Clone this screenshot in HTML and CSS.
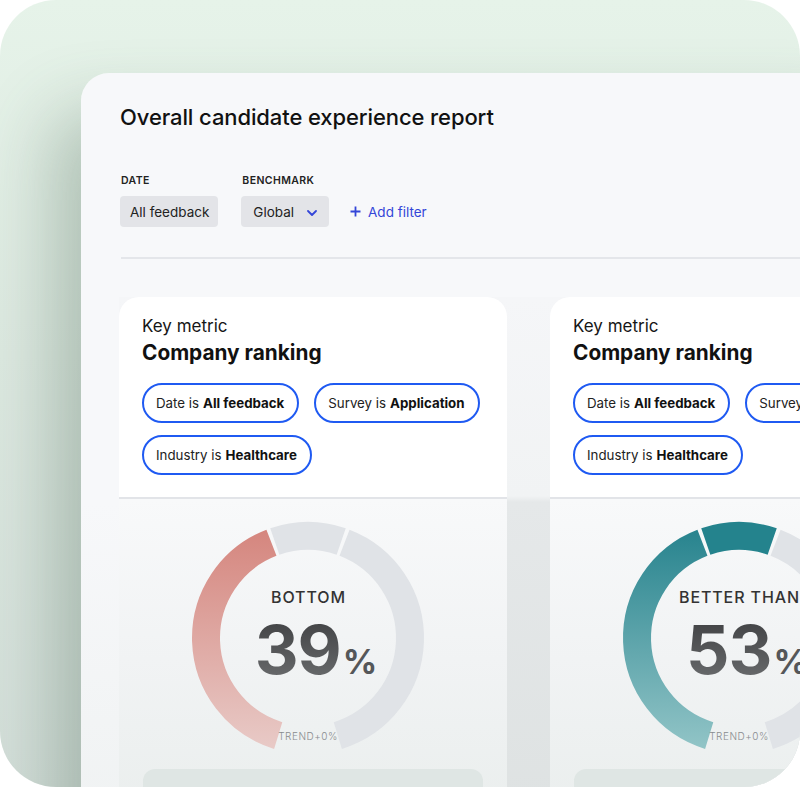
FILE: index.html
```html
<!DOCTYPE html>
<html lang="en">
<head>
<meta charset="utf-8">
<title>Overall candidate experience report</title>
<link rel="stylesheet" href="styles.css">
</head>
<body>
<div class="frame">
  <div class="panel">
    <h1 class="title">Overall candidate experience report</h1>
    <div class="filters">
      <div class="filter">
        <div class="flabel">DATE</div>
        <div class="fbtn">All feedback</div>
      </div>
      <div class="filter">
        <div class="flabel">BENCHMARK</div>
        <div class="fbtn">Global
          <svg class="chev" width="10" height="6" viewBox="0 0 10 6"><path d="M1 1l4 4 4-4" fill="none" stroke="#3446d8" stroke-width="1.8" stroke-linecap="round" stroke-linejoin="round"/></svg>
        </div>
      </div>
      <div class="addfilter">
        <svg width="11" height="11" viewBox="0 0 11 11"><path d="M5.5 0.5v10M0.5 5.5h10" stroke="#3446d8" stroke-width="1.8"/></svg>
        <span>Add filter</span>
      </div>
    </div>
    <div class="divider"></div>
    <div class="cards">
      <div class="card">
        <div class="card-top">
          <div class="kicker">Key metric</div>
          <div class="ctitle">Company ranking</div>
          <div class="pills">
            <div class="pill">Date is <b>All feedback</b></div>
            <div class="pill">Survey is <b>Application</b></div>
            <div class="pill">Industry is <b>Healthcare</b></div>
          </div>
        </div>
        <div class="card-bottom">
          <div class="gauge-row">
            <div class="gauge">
              <svg class="ring" width="240" height="240" viewBox="0 0 240 240">
                <defs>
                  <linearGradient id="redg" x1="0" y1="0" x2="0" y2="240" gradientUnits="userSpaceOnUse">
                    <stop offset="0" stop-color="#d4827a"/>
                    <stop offset="1" stop-color="#e9cdca"/>
                  </linearGradient>
                </defs>
                <path d="M90.18 217.54 A102 102 0 0 1 83.45 24.77" fill="none" stroke="url(#redg)" stroke-width="28"/>
                <path d="M86.79 23.56 A102 102 0 0 1 153.21 23.56" fill="none" stroke="#e0e3e7" stroke-width="28"/>
                <path d="M156.55 24.77 A102 102 0 0 1 149.82 217.54" fill="none" stroke="#e0e3e7" stroke-width="28"/>
              </svg>
              <div class="gtext">
                <div class="glabel">BOTTOM</div>
                <div class="gnum"><span class="num">39</span><span class="pct">%</span></div>
              </div>
              <div class="trend">TREND+0%</div>
            </div>
          </div>
          <div class="placeholder"></div>
        </div>
      </div>
      <div class="card">
        <div class="card-top">
          <div class="kicker">Key metric</div>
          <div class="ctitle">Company ranking</div>
          <div class="pills">
            <div class="pill">Date is <b>All feedback</b></div>
            <div class="pill">Survey is <b>Application</b></div>
            <div class="pill">Industry is <b>Healthcare</b></div>
          </div>
        </div>
        <div class="card-bottom">
          <div class="gauge-row">
            <div class="gauge">
              <svg class="ring" width="240" height="240" viewBox="0 0 240 240">
                <defs>
                  <linearGradient id="tealg" x1="0" y1="0" x2="0" y2="240" gradientUnits="userSpaceOnUse">
                    <stop offset="0" stop-color="#22808b"/>
                    <stop offset="1" stop-color="#96c7c9"/>
                  </linearGradient>
                </defs>
                <path d="M90.18 217.54 A102 102 0 0 1 83.45 24.77" fill="none" stroke="url(#tealg)" stroke-width="28"/>
                <path d="M86.79 23.56 A102 102 0 0 1 153.21 23.56" fill="none" stroke="#24838d" stroke-width="28"/>
                <path d="M156.55 24.77 A102 102 0 0 1 149.82 217.54" fill="none" stroke="#e0e3e7" stroke-width="28"/>
              </svg>
              <div class="gtext">
                <div class="glabel">BETTER THAN</div>
                <div class="gnum"><span class="num">53</span><span class="pct">%</span></div>
              </div>
              <div class="trend">TREND+0%</div>
            </div>
          </div>
          <div class="placeholder"></div>
        </div>
      </div>
    </div>
  </div>
</div>
</body>
</html>
```
FILE: styles.css
```css
* { box-sizing: border-box; }
html, body { margin: 0; padding: 0; background: #ffffff; }
body { font-family: Inter, "Noto Sans", sans-serif; color: #151515; }

.frame {
  width: 800px;
  height: 787px;
  overflow: hidden;
  border-radius: 56px;
  background: linear-gradient(to bottom, #e6f3e9 0%, #dde9e1 45%, #d3ded9 100%);
  padding: 73px 0 0 81px;
}

.panel {
  width: 800px;
  height: 820px;
  background: linear-gradient(to bottom, #f7f8fa 0, #f7f8fa 430px, #eef1f1 100%);
  border-top-left-radius: 28px;
  box-shadow: -28px 40px 70px rgba(70, 100, 82, 0.32);
  padding: 30px 0 0 39px;
}

.title {
  margin: 0;
  font-size: 22px;
  line-height: 28px;
  font-weight: 500;
  letter-spacing: -0.1px;
  color: #111;
}

.filters {
  display: flex;
  align-items: flex-end;
  margin-top: 43px;
}
.filter { display: flex; flex-direction: column; margin-right: 23px; }
.flabel {
  font-size: 10.5px;
  line-height: 14px;
  font-weight: 600;
  letter-spacing: 0.4px;
  color: #222;
  margin-bottom: 8px;
  padding-left: 1px;
}
.fbtn {
  height: 31px;
  display: flex;
  align-items: center;
  padding: 0 9px 0 10px;
  background: #e3e4e8;
  border-radius: 4px;
  font-size: 13.5px;
  color: #222;
}
.filter + .filter .fbtn { padding-right: 12px; padding-left: 12px; }
.chev { margin-left: 13px; margin-top: 2px; }
.addfilter {
  height: 31px;
  display: flex;
  align-items: center;
  gap: 7px;
  margin-left: -2px;
  color: #3446d8;
  font-size: 13.5px;
}

.divider {
  height: 2px;
  background: #e4e6ea;
  margin-top: 30px;
  margin-left: 1px;
}

.cards {
  display: flex;
  gap: 43px;
  margin-top: 38px;
  margin-left: -1px;
  background: linear-gradient(to bottom, #f5f6f8 0, #f1f3f4 199px, #e5e8e9 205px, #dee2e2 100%);
}
.card {
  width: 388px;
  flex: none;
  border-radius: 20px 20px 0 0;
  overflow: hidden;
}
.card-top {
  background: #ffffff;
  padding: 18px 0 22px 23px;
  border-bottom: 2px solid #e2e4e8;
}
.kicker { font-size: 17px; line-height: 22px; color: #161616; }
.ctitle { font-size: 20.8px; line-height: 26px; font-weight: 700; color: #111; margin-top: 3px; }
.pills {
  display: flex;
  flex-wrap: wrap;
  gap: 12px 15px;
  margin-top: 17px;
  width: 355px;
}
.pill {
  height: 40px;
  display: flex;
  align-items: center;
  padding: 0 13px 0 12px;
  border: 2px solid #1f5af2;
  border-radius: 20px;
  font-size: 13.3px;
  color: #222;
  white-space: nowrap;
}
.pill b { font-weight: 700; color: #111; margin-left: 4px; }

.card-bottom {
  background: linear-gradient(to bottom, #f8f9fa 0%, #f1f3f4 50%, #eaeeed 100%);
  padding-top: 19px;
  height: 320px;
}
.gauge-row { display: flex; justify-content: center; padding-right: 10px; }
.gauge {
  display: grid;
  width: 240px;
  height: 240px;
}
.ring, .gtext, .trend { grid-area: 1 / 1; }
.gtext {
  display: flex;
  flex-direction: column;
  align-items: center;
  padding-top: 69px;
}
.glabel {
  font-size: 16px;
  line-height: 20px;
  font-weight: 500;
  letter-spacing: 0.9px;
  color: #333;
  white-space: nowrap;
  padding-left: 1px;
}
.gnum {
  display: flex;
  align-items: baseline;
  margin-top: 8px;
  padding-left: 16px;
  white-space: nowrap;
}
.num {
  font-size: 68px;
  line-height: 68px;
  font-weight: 700;
  letter-spacing: -1px;
  background: linear-gradient(to bottom, #3f4042, #6a6c6e);
  -webkit-background-clip: text;
  background-clip: text;
  color: transparent;
}
.pct {
  font-size: 34px;
  font-weight: 700;
  color: #555759;
  margin-left: 2px;
}
.trend {
  align-self: end;
  justify-self: center;
  margin-bottom: 16px;
  font-size: 10px;
  line-height: 12px;
  font-weight: 300;
  letter-spacing: 0.5px;
  color: #888b8e;
}
.placeholder {
  height: 40px;
  margin: 11px 24px 0 24px;
  border-radius: 12px;
  background: #dfe6e4;
}
```
